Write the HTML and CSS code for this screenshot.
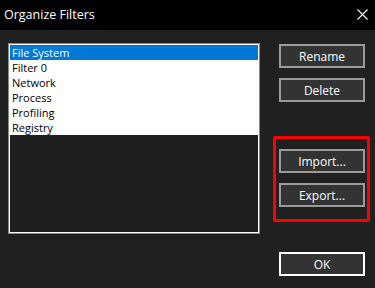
FILE: index.html
```html
<!DOCTYPE html>
<html>
<head>
<meta charset="utf-8">
<link rel="stylesheet" href="styles.css">
</head>
<body>
<div class="dialog">
  <div class="titlebar">
    <span class="title">Organize Filters</span>
    <svg class="close" width="11" height="11" viewBox="0 0 11 11"><path d="M0.5 0.5 L10.5 10.5 M10.5 0.5 L0.5 10.5" stroke="#ffffff" stroke-width="1.1" fill="none"/></svg>
  </div>
  <div class="content">
    <div class="listbox">
      <div class="listinner">
        <div class="row selected">File System</div>
        <div class="row">Filter 0</div>
        <div class="row">Network</div>
        <div class="row">Process</div>
        <div class="row">Profiling</div>
        <div class="row">Registry</div>
      </div>
    </div>
    <div class="buttons">
      <div class="btn">Rename</div>
      <div class="btn gap10">Delete</div>
      <div class="btn gap47">Import...</div>
      <div class="btn gap10">Export...</div>
      <div class="btn ok">OK</div>
    </div>
  </div>
  <div class="highlight"></div>
</div>
</body>
</html>
```
FILE: styles.css
```css
html, body {
  margin: 0;
  padding: 0;
  background: #202020;
}
.dialog {
  position: relative;
  width: 375px;
  height: 288px;
  background: #202020;
  font-family: "Open Sans", "Noto Sans", sans-serif;
  font-size: 12px;
  overflow: hidden;
}
.titlebar {
  height: 30px;
  background: #000000;
  display: flex;
  align-items: center;
  justify-content: space-between;
  padding: 0 7px 0 4px;
  box-sizing: border-box;
}
.title {
  color: #ffffff;
  font-size: 12.5px;
  position: relative;
  top: -1px;
}
.close {
  display: block;
  margin-top: -1px;
}
.content {
  display: flex;
  padding: 13px 10px 0 8px;
  justify-content: space-between;
}
.listbox {
  width: 252px;
  height: 191px;
  box-sizing: border-box;
  border: 1px solid #8a8a8a;
}
.listinner {
  height: 100%;
  box-sizing: border-box;
  border: 1px solid #ffffff;
  background: #1e1e1e;
}
.row {
  height: 15px;
  line-height: 15px;
  background: #ffffff;
  color: #000000;
  padding-left: 2px;
  font-size: 11px;
  white-space: nowrap;
  overflow: hidden;
}
.row.selected {
  background: #0078d7;
  color: #ffffff;
}
.buttons {
  display: flex;
  flex-direction: column;
  margin-top: 1px;
}
.btn {
  width: 86px;
  height: 24px;
  box-sizing: border-box;
  border: 2px solid #9b9b9b;
  background: #333333;
  color: #ffffff;
  display: flex;
  align-items: center;
  justify-content: center;
  font-size: 12px;
}
.gap10 { margin-top: 10px; }
.gap47 { margin-top: 47px; }
.btn.ok {
  margin-top: 45px;
  border-color: #ffffff;
}
.highlight {
  position: absolute;
  left: 273px;
  top: 136px;
  width: 97px;
  height: 86px;
  box-sizing: border-box;
  border: 3px solid #ff0000;
  border-radius: 2px;
}
```
